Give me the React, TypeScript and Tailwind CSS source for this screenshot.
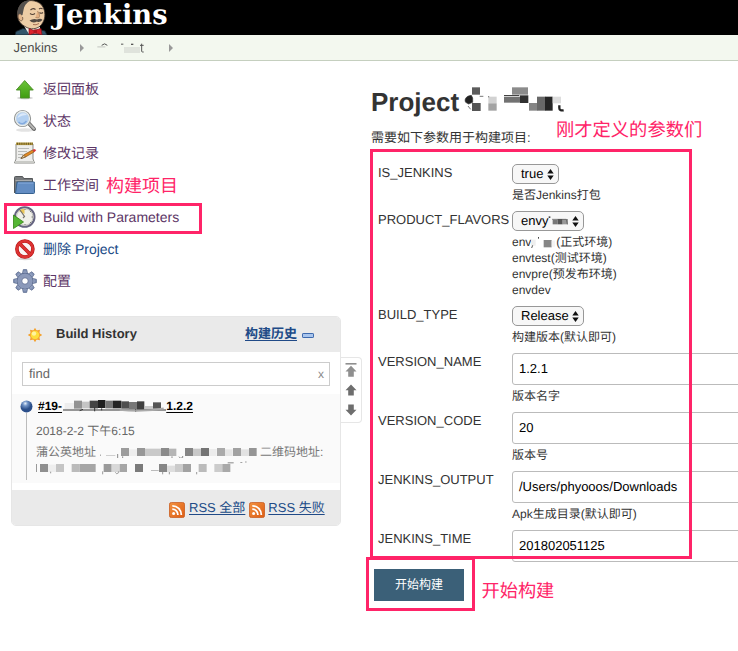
import React from "react";

type Block = [number, number, number, number, string];

// Pixelated blocks that hide private names; coordinates are in thirds of a pixel.
function Mosaic({ w, h, blocks, className = "", children }: { w: number; h: number; blocks: Block[]; className?: string; children?: React.ReactNode }) {
  return (
    <svg width={w} height={h} viewBox={`0 0 ${w * 3} ${h * 3}`} className={`shrink-0 ${className}`}>
      {blocks.map(([x, y, bw, bh, fill], i) => (
        <rect key={i} x={x} y={y} width={bw} height={bh} fill={fill} />
      ))}
      {children}
    </svg>
  );
}

function Butler() {
  return (
    <svg width="34" height="35" viewBox="0 0 34 35" className="shrink-0">
      <path d="M0 35L1 31.5L8 28.5L14 30L26 30L30 31L32 35Z" fill="#33566b" stroke="#16232b" strokeWidth=".8" />
      <path d="M9 26L14 34H24L25 27Z" fill="#f5f0ea" />
      <path d="M3.5 20C1 14 3 6 8 2.5C14 -1 25 0 28.5 8C31 14 30 20 26.5 24.5C23 29.5 15 30 10 26.5C7 25 5 23 3.5 20Z" fill="#edcda6" stroke="#3c3028" strokeWidth=".8" />
      <path d="M2.8 17C1.5 10 4 4.5 8.5 2C10.5 .8 13 .3 15.5 .3C11 3 9 6.500 8.500 10L7.500 15Z" fill="#54504d" />
      <path d="M5.500 14C2.500 13 2.500 18 4.500 20C6.500 22 8.500 20 7.500 17" fill="#e3b88e" stroke="#5a4232" strokeWidth=".7" />
      <path d="M15.500 10Q18 7.500 20.500 9.500M24 9Q26 7.500 27.500 9" fill="none" stroke="#514036" strokeWidth="1.1" />
      <path d="M15 13.500Q17.500 15.500 20 13.500M24.500 12.500Q26 14 28 12.500" fill="none" stroke="#514036" strokeWidth="1.1" />
      <path d="M22.500 11Q26 16 23.500 18L20.500 17.500" fill="#e2b083" stroke="#8c6648" strokeWidth=".6" />
      <path d="M14.500 20.500Q18.500 18 22 19.500Q26 18 27.500 20Q24.500 23 22 21.500Q18 24 14.500 20.500Z" fill="#504842" />
      <path d="M18 24.500Q21 25.500 24 23.500" fill="none" stroke="#a0664e" strokeWidth=".9" />
      <path d="M14 28.500L19 30.500L26 28.500L27 35L20 33L14 35Z" fill="#dd222c" stroke="#79131a" strokeWidth=".7" />
      <rect x="18.500" y="29.500" width="3.500" height="4" rx="1" fill="#b5151f" />
    </svg>
  );
}

function UpIcon() {
  return (
    <svg width="24" height="24" viewBox="0 0 24 24">
      <defs><linearGradient id="up" x2="0" y2="1"><stop stopColor="#6cc53a" /><stop offset="1" stopColor="#3f9c10" /></linearGradient></defs>
      <ellipse cx="12" cy="21" rx="8" ry="1.5" fill="#d5d5d5" />
      <path d="M11.700 3.500L20.300 13H16.300V21H7.500V13H3.300Z" fill="url(#up)" stroke="#4a8d26" strokeWidth=".9" strokeLinejoin="round" />
    </svg>
  );
}

function SearchIcon() {
  return (
    <svg width="24" height="24" viewBox="0 0 24 24">
      <ellipse cx="12" cy="21" rx="9" ry="1.7" fill="#e3e3e3" />
      <path d="M15.5 14L21 20" stroke="#686868" strokeWidth="4" strokeLinecap="round" />
      <path d="M16 14.5L21 19.8" stroke="#b5b5b3" strokeWidth="2" strokeLinecap="round" />
      <circle cx="9.5" cy="9.5" r="7.6" fill="#b3d0f1" stroke="#8c8f8e" strokeWidth="2" />
      <circle cx="9.5" cy="9.5" r="7" fill="none" stroke="#e9eeee" strokeWidth="1.3" />
      <path d="M4.5 9C5.500 4 11.500 3 14 6C10.500 6 7.500 7 4.500 9" fill="#dbe9fa" />
      <path d="M5.500 13Q9.500 17 13.500 12" fill="none" stroke="#83aade" strokeWidth="1.5" />
    </svg>
  );
}

function NotepadIcon() {
  return (
    <svg width="24" height="24" viewBox="0 0 24 24">
      <path d="M3 3H20V18L21.500 22H1.5L3 18Z" fill="#eeeeec" stroke="#8b8c88" />
      <path d="M2 20H21V22H2Z" fill="#c9cac6" />
      <rect x="3" y="1.5" width="17" height="2.6" fill="#b49a45" />
      <path d="M4 2.800H20" stroke="#6e5c21" strokeWidth="2" strokeDasharray="1 1.2" />
      <path d="M5 7.5H16M5 10.5H14M5 13.5H10M5 16.5H9" stroke="#b8bab7" />
      <path d="M8 17.500L10.500 14L19.5 9L21 11L12.500 16Z" fill="#e28a22" stroke="#86521a" strokeWidth=".7" />
      <path d="M19.500 9L21 8L23.300 9L21.300 11.2Z" fill="#d83636" />
      <path d="M8 17.500L10.500 14L12.500 16Z" fill="#e5c596" stroke="#5b492e" strokeWidth=".6" />
    </svg>
  );
}

function FolderIcon() {
  return (
    <svg width="24" height="24" viewBox="0 0 24 24">
      <path d="M1.500 20V4.5Q1.500 3.5 2.500 3.5H9Q10 3.5 10.300 4.5L10.500 5.500H19.500V10" fill="#777a7d" stroke="#55585a" />
      <path d="M2.500 7.500H19" stroke="#a8abad" />
      <path d="M4 9H21.300L21.500 19.500Q21.500 20.5 20.500 20.5H2.5Z" fill="#638dc3" stroke="#36618f" />
      <path d="M5 10H20.5" stroke="#8aaede" />
    </svg>
  );
}

function ClockIcon() {
  return (
    <svg width="24" height="24" viewBox="0 0 24 24">
      <circle cx="11.7" cy="12" r="9.8" fill="#f0f0e9" stroke="#666581" strokeWidth="2" />
      <circle cx="11.7" cy="12" r="8.3" fill="none" stroke="#c1c2bd" />
      <path d="M11.500 9L6 6A8.5 8.5 0 0 1 11.500 3.8Z" fill="#eac657" />
      <path d="M7 5L11.500 11.500L10 13" fill="none" stroke="#77746c" strokeWidth="1.2" />
      <path d="M18.5 12H20M12 19V20M12 4V5M17 17L18 18M17 7L18 6" stroke="#777" />
      <path d="M.500 10L10.500 17L.500 23.5Z" fill="#55b634" stroke="#348114" strokeWidth=".8" />
    </svg>
  );
}

function DeleteIcon() {
  return (
    <svg width="24" height="24" viewBox="0 0 24 24">
      <ellipse cx="12" cy="22" rx="8" ry="1.2" fill="#d9d9d9" />
      <circle cx="11.900" cy="12" r="8" fill="#faf4f4" stroke="#b61616" strokeWidth="3.6" />
      <path d="M6.500 6.500L17.500 17.500" stroke="#b61616" strokeWidth="3.6" />
      <circle cx="11.900" cy="12" r="8" fill="none" stroke="#dd3333" strokeWidth="2.4" />
      <path d="M6.500 6.500L17.500 17.500" stroke="#dd3333" strokeWidth="2.4" />
    </svg>
  );
}

function GearIcon() {
  return (
    <svg width="24" height="24" viewBox="0 0 24 24">
      <defs><linearGradient id="gear" x2="0" y2="1"><stop stopColor="#7587ac" /><stop offset="1" stopColor="#a5b0cc" /></linearGradient></defs>
      <g fill="url(#gear)" stroke="#56658a" strokeWidth=".7">
        {[0, 45, 90, 135, 180, 225, 270, 315].map((a) => (
          <path key={a} d="M9.3 5L10.3 .6H13.700L14.7 5Z" transform={`rotate(${a} 12 12)`} />
        ))}
        <circle cx="12" cy="12" r="7.9" />
      </g>
      <circle cx="12" cy="12" r="7.3" fill="#8b99ba" />
      <circle cx="12" cy="12" r="3.3" fill="#fff" stroke="#6b799c" />
    </svg>
  );
}

function SunIcon() {
  return (
    <svg width="16" height="16" viewBox="0 0 16 16">
      <path d="M8 .8L9.6 3.6L13 2.8L12.3 6.2L15.3 8L12.3 9.8L13 13.2L9.6 12.4L8 15.2L6.4 12.4L3 13.2L3.7 9.8L.7 8L3.7 6.2L3 2.8L6.4 3.6Z" fill="#f5a02b" />
      <circle cx="8" cy="8" r="4.6" fill="#fdde3c" stroke="#f6a532" strokeWidth=".8" />
      <circle cx="7" cy="6.6" r="2.2" fill="#fff4a0" />
    </svg>
  );
}

function RssIcon() {
  return (
    <svg width="16" height="16" viewBox="0 0 16 16" className="mt-[3px] shrink-0">
      <defs><linearGradient id="rss" x2="1" y2="1"><stop stopColor="#f2913f" /><stop offset="1" stopColor="#dd5d14" /></linearGradient></defs>
      <rect x=".4" y=".4" width="15.2" height="15.2" rx="2.2" fill="url(#rss)" stroke="#c7581c" strokeWidth=".8" />
      <circle cx="4.6" cy="11.5" r="1.5" fill="#fff" />
      <path d="M3.3 7.2A5.6 5.6 0 0 1 8.9 12.9M3.3 3.8A9 9 0 0 1 12.3 12.9" fill="none" stroke="#fff" strokeWidth="1.8" />
    </svg>
  );
}

function Arrow({ down = false, bar = false }: { down?: boolean; bar?: boolean }) {
  return (
    <svg width="12" height="14" viewBox="0 0 12 14">
      {bar && <rect x=".5" y="0" width="11" height="1.6" fill="#8f8f8f" />}
      <path d="M6 1.5L11.5 7.2H8.8V12.5H3.2V7.2H.5Z" fill={bar ? "#8f8f8f" : "#6e6e6e"} transform={down ? "rotate(180 6 7)" : bar ? "translate(0 1.2)" : undefined} />
    </svg>
  );
}

function Crumb() {
  return (
    <svg width="4" height="8" viewBox="0 0 4 8" className="shrink-0">
      <path d="M0 0L4 4L0 8Z" fill="#999" />
    </svg>
  );
}

const tasks = [
  { icon: <UpIcon />, text: "返回面板", color: "text-[#5c3566]" },
  { icon: <SearchIcon />, text: "状态", color: "text-[#5c3566]" },
  { icon: <NotepadIcon />, text: "修改记录", color: "text-[#5c3566]" },
  { icon: <FolderIcon />, text: "工作空间", color: "text-[#5c3566]" },
  { icon: <ClockIcon />, text: "Build with Parameters", color: "text-[#5c3566]" },
  { icon: <DeleteIcon />, text: "删除 Project", color: "text-[#204a87]" },
  { icon: <GearIcon />, text: "配置", color: "text-[#5c3566]" },
];

const titleBlocks: Block[] = [
  [36, 10, 24, 22, "#5c5c5c"], [36, 57, 26, 24, "#555"], [85, 38, 25, 20, "#d2d2d2"], [85, 58, 25, 22, "#a3a3a3"],
  [156, 10, 48, 22, "#8b8b8b"], [132, 38, 49, 18, "#727272"], [180, 34, 25, 23, "#303030"], [132, 33, 46, 3, "#444"],
  [207, 57, 25, 23, "#858585"], [231, 38, 25, 42, "#686868"], [255, 38, 23, 42, "#252525"], [278, 38, 25, 20, "#ddd"],
];

const nameBlocks: Block[] = [
  [5, 9, 28, 18, "#ededed"], [33, 2, 24, 24, "#929292"], [57, 5, 23, 20, "#c5c5c5"], [80, 2, 25, 23, "#444"],
  [105, 0, 22, 24, "#202020"], [127, 2, 22, 23, "#777"], [149, 2, 26, 23, "#252525"], [175, 4, 23, 22, "#4e4e4e"],
  [198, 6, 24, 21, "#777"], [222, 4, 22, 24, "#3f3f3f"], [246, 18, 24, 10, "#c9c9c9"], [270, 7, 24, 19, "#555"],
];

const addressBlocks: Block[] = [
  [0, 20, 3, 3, "#888"], [18, 21, 28, 2, "#bbb"], [63, 0, 24, 24, "#9c9c9c"], [87, 4, 24, 20, "#eee"], [111, 0, 24, 24, "#979797"],
  [135, 2, 48, 22, "#c9c9c9"], [183, 0, 24, 24, "#8b8b8b"], [207, 2, 22, 22, "#b5b5b5"], [255, 0, 24, 24, "#858585"],
  [279, 2, 24, 22, "#c8c8c8"], [303, 0, 24, 24, "#747474"], [327, 3, 23, 21, "#ececec"], [351, 0, 24, 24, "#aaa"],
  [375, 4, 23, 20, "#e5e5e5"], [399, 0, 24, 24, "#a1a1a1"], [423, 4, 24, 20, "#e2e2e2"], [447, 0, 23, 24, "#959595"],
];

const address2Blocks: Block[] = [
  [0, 3, 3, 24, "#999"], [12, 3, 24, 24, "#8f8f8f"], [36, 5, 24, 22, "#eee"], [60, 3, 24, 24, "#c5c5c5"], [107, 3, 24, 24, "#bbb"],
  [131, 3, 48, 24, "#a6a6a6"], [203, 3, 24, 24, "#9a9a9a"], [227, 3, 24, 24, "#d8d8d8"], [251, 3, 22, 24, "#a6a6a6"],
  [297, 3, 24, 24, "#7b7b7b"], [345, 21, 23, 3, "#bbb"], [369, 3, 24, 24, "#868686"], [393, 8, 24, 19, "#dedede"],
  [417, 3, 24, 24, "#cbcbcb"], [441, 3, 24, 24, "#a2a2a2"], [488, 3, 24, 24, "#bbb"], [535, 3, 24, 24, "#ccc"], [559, 3, 24, 24, "#a9a9a9"],
  [575, -2, 18, 3, "#888"], [613, -3, 6, 2, "#777"], [627, -4, 5, 2, "#777"],
];

function Select({ children, wide = false }: { children: React.ReactNode; wide?: boolean }) {
  return (
    <div className={`flex h-5 items-center justify-between rounded-[5px] border border-[#989898] bg-[#f7f7f7] pr-1 pl-2 text-[13px] leading-[18px] text-black ${wide ? "w-[72px]" : "w-[47px]"}`}>
      <span className="flex items-center">{children}</span>
      <svg width="7" height="11" viewBox="0 0 7 11"><path d="M3.5 0L6.7 4.6H.3ZM3.5 11L.3 6.4H6.7Z" fill="#111" /></svg>
    </div>
  );
}

function Input({ value }: { value: string }) {
  return <div className="flex h-8 w-[300px] items-center rounded-[3px] border border-[#bbb] bg-white pb-px pl-1.5 text-[13px] text-black">{value}</div>;
}

function Field({ label, control, help }: { label: string; control: React.ReactNode; help?: React.ReactNode }) {
  return (
    <div className="flex pb-2">
      <div className="w-[134px] shrink-0 text-[13px] leading-[18px]">{label}</div>
      <div className="shrink-0">
        {control}
        {help && <div className="mt-[3px] text-[12px] leading-4">{help}</div>}
      </div>
    </div>
  );
}

export default function App() {
  return (
    <div className="relative h-[651px] w-[738px] overflow-hidden bg-white font-['Liberation_Sans','Noto_Sans_CJK_SC',sans-serif] text-[#333] [text-rendering:geometricPrecision]">
      <header className="flex h-[35px] bg-black pl-[15px]">
        <Butler />
        <svg width="122" height="35" viewBox="0 0 122 35" className="shrink-0">
          <text x="4" y="23.5" fill="#fff" fontFamily="'DejaVu Serif', serif" fontWeight="bold" fontSize="27.5" textLength="114.5" lengthAdjust="spacingAndGlyphs">Jenkins</text>
        </svg>
      </header>
      <nav className="flex h-[26px] items-center border-b border-[#c5cfbf] bg-[#f3f8ef] pl-[13.5px] text-[13px] text-[#4d4d4b]">
        <span className="w-[66.5px]">Jenkins</span>
        <Crumb />
        <Mosaic w={51} h={14} className="ml-3 mr-[22px]" blocks={[[4, 15, 24, 5, "#d5d9d2"], [84, 18, 48, 18, "#dfe3dc"], [75, 8, 7, 3, "#555"], [105, 8, 7, 4, "#555"]]}>
          <path d="M17 13Q26 4 34 13M132 13H143M137 8V31Q137 34 143 33" fill="none" stroke="#555" strokeWidth="3" />
        </Mosaic>
        <Crumb />
      </nav>

      <div className="flex">
        <aside className="w-[371px] shrink-0 pt-3 pl-[11px]">
          <ul>
            {tasks.map((task) => (
              <li key={task.text} className={`flex h-8 items-center gap-1.5 pl-0.5 text-[14px] leading-5 ${task.color}`}>
                {task.icon}
                <span>{task.text}</span>
              </li>
            ))}
          </ul>

          <div className="mt-[19px] flex items-start">
            <section className="h-[210px] w-[330px] shrink-0 overflow-hidden rounded-[5px] border border-[#e6e6e6] bg-white">
              <div className="flex h-[35px] items-center bg-[#eaeaea] pl-[15px] text-[13px]">
                <SunIcon />
                <b className="ml-[13px] w-[189px] pb-0.5">Build History</b>
                <b className="pb-0.5 text-[#204a87] underline underline-offset-2">构建历史</b>
                <svg width="12" height="5" viewBox="0 0 12 5" className="mt-0.5 ml-[5px]"><rect x=".5" y=".5" width="11" height="4" rx=".6" fill="#a9c5ed" stroke="#3d69ad" /></svg>
              </div>
              <div className="mt-[10px] ml-[10px] flex h-6 w-[308px] items-center justify-between border border-[#ccc] pr-[5px] pl-1.5 text-[13px] text-[#666]">
                <span>find</span><span className="text-[12px] text-[#888]">x</span>
              </div>
              <div className="mt-2 flex h-[89px] bg-[#fafafa] pl-[7px]">
                <div className="flex w-[14px] shrink-0 flex-col items-center pt-[6px]">
                  <svg width="13" height="13" viewBox="0 0 13 13" className="shrink-0">
                    <defs><radialGradient id="ball" cx=".4" cy=".25"><stop stopColor="#e8f1fb" /><stop offset=".4" stopColor="#7093c6" /><stop offset="1" stopColor="#2b4f8a" /></radialGradient></defs>
                    <circle cx="6.5" cy="6.5" r="6" fill="url(#ball)" />
                  </svg>
                  <div className="h-[67px] w-px bg-[#bbb]" />
                </div>
                <div className="ml-[3px] pt-[3px] text-[12px] text-[#666]">
                  <div className="ml-[2px] flex h-[18px] w-[155px] items-center justify-between border-b border-transparent leading-[18px] font-bold text-black underline decoration-1 underline-offset-2">
                    <span>#19-</span>
                    <Mosaic w={103} h={12} blocks={nameBlocks}>
                      <path d="M0 30H309M50 32L60 28M95 22V34M116 25V31M218 28V36" fill="none" stroke="#333" strokeWidth="3" />
                      <path d="M170 30Q240 38 302 25" fill="none" stroke="#aaa" strokeWidth="5" />
                    </Mosaic>
                    <span>1.2.2</span>
                  </div>
                  <div className="mt-[7px] leading-[18px]">2018-2-2 下午6:15</div>
                  <div className="mt-[3px] flex h-[18px] items-center leading-[18px] text-[#777]">
                    <span className="w-[64px] shrink-0">蒲公英地址</span>
                    <Mosaic w={160} h={10} className="mt-px" blocks={addressBlocks}>
                      <path d="M53 18V30M68 25V30M216 25V31M237 26Q240 34 248 29V24" fill="none" stroke="#888" strokeWidth="3" />
                    </Mosaic>
                    <span className="whitespace-nowrap">二维码地址:</span>
                  </div>
                  <Mosaic w={220} h={13} className="mt-[2px] overflow-visible" blocks={address2Blocks}>
                    <path d="M44 26V31M200 25V34M238 28Q241 36 248 29V25M380 27V34M400 27V34M482 27V34" fill="none" stroke="#999" strokeWidth="3" />
                  </Mosaic>
                </div>
              </div>
              <div className="mt-[7px] flex h-[36px] items-center bg-[#eaeaea] pl-[157px] text-[13px] text-[#204a87]">
                <RssIcon /><span className="ml-1 underline underline-offset-2">RSS 全部</span>
                <span className="w-[3.5px]" /><RssIcon /><span className="ml-[3.5px] underline underline-offset-2">RSS 失败</span>
              </div>
            </section>
            <div className="mt-[41px] flex h-[66px] w-[21px] flex-col items-center gap-[6px] rounded-r-[4px] border border-l-0 border-[#e6e6e6] pt-[5px]">
              <Arrow bar /><Arrow /><Arrow down />
            </div>
          </div>
        </aside>

        <main className="w-[367px] shrink-0 overflow-hidden pt-[25px]">
          <h1 className="flex h-8 items-center text-[26px] font-bold leading-8">
            <span className="w-[89px]">Project</span>
            <Mosaic w={110} h={32} className="-mt-1" blocks={titleBlocks}>
              <path d="M34 34C16 36 13 48 17 55L26 60L38 55V42ZM24 66L32 76M59 37H70M86 36V40" fill="#222" stroke="#333" strokeWidth="2" />
              <path d="M298 64V72Q298 81 311 79" fill="none" stroke="#222" strokeWidth="7" />
            </Mosaic>
          </h1>
          <p className="mt-[11px] text-[13px] leading-[18px]">需要如下参数用于构建项目:</p>
          <form className="mt-[17px] pl-[7px]">
            <Field label="IS_JENKINS" control={<Select>true</Select>} help="是否Jenkins打包" />
            <Field
              label="PRODUCT_FLAVORS"
              control={
                <Select wide>
                  envy
                  <Mosaic w={20} h={10} blocks={[[2, 1, 5, 5, "#444"], [14, 11, 15, 14, "#777"], [29, 9, 15, 16, "#555"], [44, 9, 16, 16, "#999"]]}>
                    <path d="M12 10H55L58 25" fill="none" stroke="#555" strokeWidth="2" />
                  </Mosaic>
                </Select>
              }
              help={
                <>
                  <div className="flex items-center">
                    env
                    <Mosaic w={25} h={16} blocks={[[0, 17, 14, 18, "#eee"], [21, 9, 3, 5, "#444"], [38, 18, 24, 22, "#868686"], [62, 20, 10, 18, "#f4f4f4"]]}>
                      <path d="M5 34L2 42" stroke="#555" strokeWidth="3" />
                    </Mosaic>
                    (正式环境)
                  </div>
                  <div>envtest(测试环境)</div>
                  <div>envpre(预发布环境)</div>
                  <div>envdev</div>
                </>
              }
            />
            <Field label="BUILD_TYPE" control={<Select wide>Release</Select>} help="构建版本(默认即可)" />
            <Field label="VERSION_NAME" control={<Input value="1.2.1" />} help="版本名字" />
            <Field label="VERSION_CODE" control={<Input value="20" />} help="版本号" />
            <Field label="JENKINS_OUTPUT" control={<Input value="/Users/phyooos/Downloads" />} help="Apk生成目录(默认即可)" />
            <Field label="JENKINS_TIME" control={<Input value="201802051125" />} />
          </form>
          <button type="button" className="mt-[-1px] ml-[3px] block h-8 w-[90px] bg-[#3b6078] text-[12px] leading-8 text-white">开始构建</button>
        </main>
      </div>

      {/* Hand-placed tutorial annotations over the page */}
      <div className="absolute top-[203px] left-[4px] h-[31px] w-[198px] border-3 border-[#ff2468]" />
      <div className="absolute top-[149px] left-[370px] h-[410px] w-[322px] border-3 border-[#ff2468]" />
      <div className="absolute top-[557px] left-[366px] h-[54px] w-[109px] border-3 border-[#ff2468]" />
      <div className="absolute top-[174px] left-[106px] text-[18px] leading-6 whitespace-nowrap text-[#ff2468]">构建项目</div>
      <div className="absolute top-[118px] left-[556px] text-[18.3px] leading-6 whitespace-nowrap text-[#ff2468]">刚才定义的参数们</div>
      <div className="absolute top-[579px] left-[481.5px] text-[18.2px] leading-6 whitespace-nowrap text-[#ff2468]">开始构建</div>
    </div>
  );
}
